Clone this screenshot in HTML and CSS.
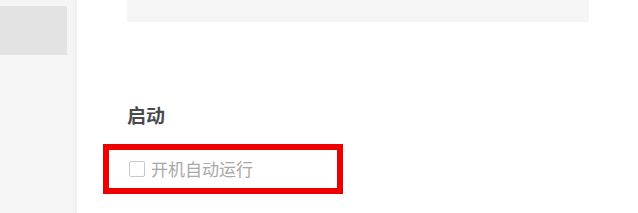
FILE: index.html
```html
<!DOCTYPE html>
<html lang="zh-CN">
<head>
<meta charset="UTF-8">
<title>设置</title>
<link rel="stylesheet" href="styles.css">
</head>
<body>
<div class="app">
<div class="sidebar">
<div class="nav-item active"></div>
</div>
<div class="main">
<div class="panel"></div>
<div class="section">
<h2 class="section-title">启动</h2>
<label class="option">
<span class="checkbox"></span>
<span class="option-text">开机自动运行</span>
</label>
<div class="highlight"></div>
</div>
</div>
</div>
</body>
</html>
```

FILE: styles.css
```css
body {
margin: 0;
font-family: "Noto Sans CJK SC", "Noto Sans", sans-serif;
background: #fff;
}
.app {
display: flex;
height: 213px;
overflow: hidden;
}
.sidebar {
width: 75px;
background: #f5f5f5;
border-right: 2px solid #f0f0f0;
padding-top: 6px;
}
.nav-item {
height: 49px;
width: 67px;
}
.nav-item.active {
background: #e3e3e3;
}
.main {
flex: 1;
padding-left: 50px;
}
.panel {
width: 462px;
height: 22px;
background: #f5f5f5;
}
.section {
position: relative;
padding-top: 81px;
}
.section-title {
margin: 0;
font-size: 19px;
font-weight: bold;
color: #4a4a4a;
line-height: 24px;
}
.option {
display: flex;
align-items: center;
margin-top: 32px;
margin-left: 2px;
height: 20px;
}
.checkbox {
width: 14px;
height: 14px;
border: 1px solid #c8c8c8;
border-radius: 2px;
}
.option-text {
margin-left: 6px;
font-size: 17px;
color: #a8a8a8;
line-height: 20px;
}
.highlight {
position: absolute;
left: -24px;
top: 122px;
width: 228px;
height: 38px;
border: 6px solid #ee0000;
}
```
